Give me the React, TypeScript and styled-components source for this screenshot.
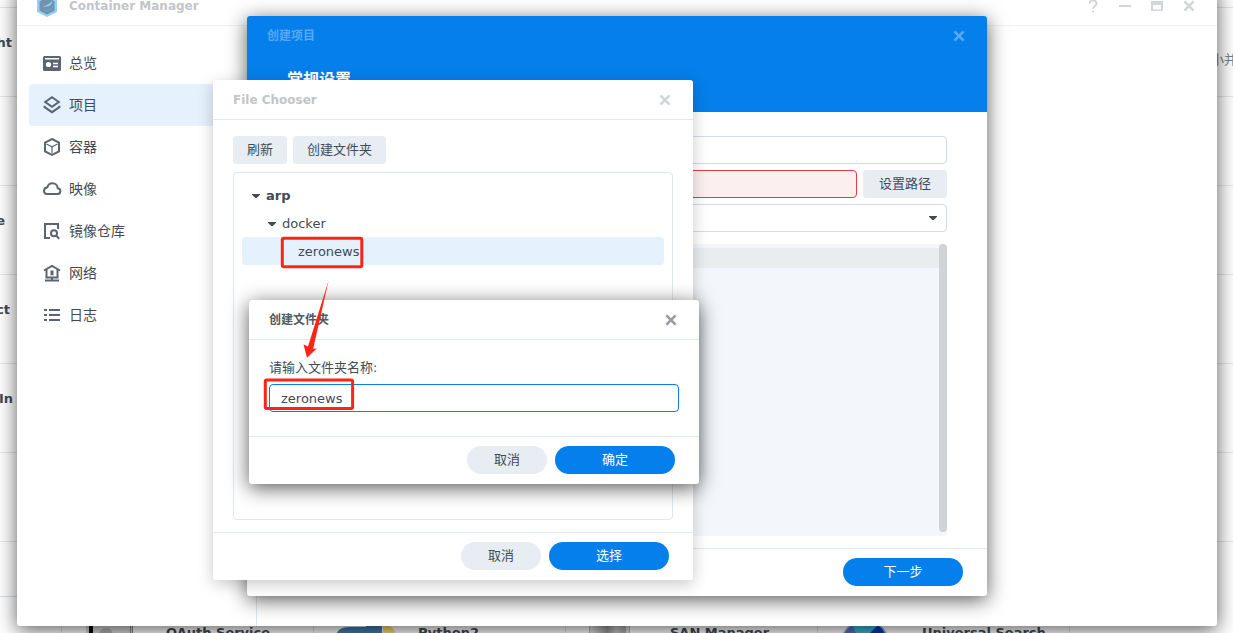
import React from 'react';
import styled, { createGlobalStyle } from 'styled-components';

const GlobalStyle = createGlobalStyle`
  * { box-sizing: border-box; }
  html, body, #root { height: 100%; }
  body {
    margin: 0;
    overflow: hidden;
    background: #fff;
    color: #414b55;
    font: 13px/20px "DejaVu Sans", "Noto Sans CJK SC", sans-serif;
  }
  button, input, select, textarea { font: inherit; color: inherit; }
  svg { display: block; }
`;

const Desktop = styled.div`
  position: relative;
  height: 100%;
  overflow: hidden;
`;

/* Package list that lies behind the windows */
const Backdrop = styled.div`
  display: flex;
  flex-direction: column;
  padding-top: 7px;
`;

const PackageRow = styled.div`
  display: flex;
  justify-content: space-between;
  height: 89px;
  padding-top: 25px;
  border-top: 1px solid #e3e7ec;
  white-space: nowrap;

  &:last-child { height: 55px; }
`;

const PackageName = styled.span<{ $width: number }>`
  display: flex;
  justify-content: flex-end;
  width: ${(p) => p.$width}px;
  overflow: hidden;
  font-weight: bold;
`;

const PackageNote = styled.span`
  margin-right: -4px;
  padding-top: 17px;
  color: #79828b;
`;

const Shelf = styled.div`
  display: grid;
  grid-template-columns: 61px repeat(4, 252px) 1fr;
  margin-right: 100px;
  border-top: 1px solid #d5e1ec;
`;

const ShelfCell = styled.div`
  display: flex;
  gap: 20px;
  height: 88px;
  padding: 26px 0 0 20px;
  border-left: 1px solid #e3e7ec;
  font-weight: bold;
  white-space: nowrap;

  &:first-child { border-left: 0; }
`;

const Frame = styled.section<{ $soft?: boolean }>`
  display: flex;
  flex-direction: column;
  position: absolute;
  background: #fff;
  border-radius: 3px;
  box-shadow: ${(p) =>
    p.$soft ? '0 4px 16px rgba(0, 0, 0, 0.22)' : '0 4px 20px rgba(0, 0, 0, 0.65)'};
`;

const ManagerWindow = styled(Frame)`
  inset: -14px 16px 7px 17px;
`;

const ProjectDialog = styled(Frame)`
  left: 247px;
  top: 16px;
  width: 740px;
`;

const ChooserDialog = styled(Frame)`
  left: 213px;
  top: 80px;
  width: 480px;
`;

const FolderDialog = styled(Frame)`
  left: 249px;
  top: 300px;
  width: 450px;
`;

const TitleBar = styled.header<{ $tone?: 'dim' | 'blue' | 'faint' }>`
  display: flex;
  align-items: center;
  height: 40px;
  padding: 0 12px 0 20px;
  border-bottom: 1px solid
    ${(p) => (p.$tone === 'blue' ? 'transparent' : p.$tone === 'faint' ? '#f1f2f4' : '#e1e8ee')};
  color: ${(p) =>
    p.$tone === 'blue' ? '#58a8f5' : p.$tone ? '#c2c5c9' : '#4f5a64'};
`;

const Title = styled.h1`
  flex: 1;
  margin: 0;
  font-size: 12px;
  line-height: 20px;
  font-weight: bold;
`;

const Logo = styled.span`
  margin-right: 12px;
`;

const IconButton = styled.button<{ $color: string }>`
  display: flex;
  align-items: center;
  justify-content: center;
  width: 32px;
  height: 32px;
  padding: 0;
  border: 0;
  background: none;
  color: ${(p) => p.$color};
`;

const ManagerBody = styled.div`
  display: flex;
  flex: 1;
`;

const Sidebar = styled.nav`
  width: 240px;
  padding: 16px 12px;
  border-right: 1px solid #dde7f0;
`;

const NavLink = styled.a<{ $active?: boolean }>`
  display: flex;
  align-items: center;
  gap: 7px;
  height: 42px;
  padding-left: 13px;
  border-radius: 4px;
  background: ${(p) => (p.$active ? '#e5f1fd' : 'none')};
  color: #414b55;
  font-size: 14px;
  text-decoration: none;

  svg { color: #5b6570; }
`;

const Banner = styled.div`
  height: 96px;
  border-radius: 3px 3px 0 0;
  background: #057feb;
`;

const StepHeading = styled.h2`
  margin: 12px 40px 0;
  color: #fff;
  font-size: 16px;
  line-height: 24px;
`;

const Form = styled.form`
  display: flex;
  flex-direction: column;
  gap: 6px;
  padding: 24px 40px 12px;
`;

const Field = styled.div`
  display: flex;
  gap: 6px;
`;

const TextInput = styled.input<{ $state?: 'error' | 'focus' }>`
  flex: 1;
  min-width: 0;
  height: 28px;
  padding: 0 11px;
  border: 1px solid
    ${(p) => (p.$state === 'error' ? '#e63c41' : p.$state === 'focus' ? '#057feb' : '#d0dde8')};
  border-radius: 4px;
  background: ${(p) => (p.$state === 'error' ? '#fcefef' : '#fff')};
  outline: 0;
`;

const SelectBox = styled.div`
  display: grid;
  flex: 1;
  align-items: center;

  > * { grid-area: 1 / 1; }
  svg { justify-self: end; margin-right: 10px; pointer-events: none; }
`;

const Select = styled.select`
  height: 28px;
  padding: 0 11px;
  border: 1px solid #d0dde8;
  border-radius: 4px;
  background: #fff;
  appearance: none;
`;

const Editor = styled.div`
  display: flex;
  height: 292px;
  margin-top: 6px;
  border-radius: 3px;
  background: linear-gradient(#e9edf0, #e9edf0) 0 4px / 100% 20px no-repeat #f3f7fb;
`;

const Code = styled.textarea`
  flex: 1;
  padding: 4px;
  border: 0;
  background: none;
  resize: none;
`;

const ScrollThumb = styled.div`
  width: 8px;
  height: 288px;
  border-radius: 4px;
  background: #d0d4d7;
`;

const Footer = styled.footer`
  display: flex;
  justify-content: flex-end;
  gap: 8px;
  height: 48px;
  padding: 9px 24px 0;
  border-top: 1px solid #e1e8ee;
`;

const Pill = styled.button<{ $primary?: boolean }>`
  width: ${(p) => (p.$primary ? 120 : 80)}px;
  height: 28px;
  padding: 0;
  border: 0;
  border-radius: 14px;
  background: ${(p) => (p.$primary ? '#057feb' : '#e8edf4')};
  color: ${(p) => (p.$primary ? '#fff' : '#414b55')};
`;

const GreyButton = styled.button<{ $wide?: boolean }>`
  height: 28px;
  padding: 0 ${(p) => (p.$wide ? 16 : 14)}px;
  border: 0;
  border-radius: 3px;
  background: #e8edf4;
`;

const ChooserBody = styled.div`
  display: flex;
  flex-direction: column;
  gap: 8px;
  padding: 16px 20px 12px;
`;

const Toolbar = styled.div`
  display: flex;
  gap: 6px;
`;

const Tree = styled.div`
  height: 348px;
  padding: 8px;
  border: 1px solid #dfe7ee;
  border-radius: 4px;
`;

const TreeRow = styled.div<{ $level: number; $selected?: boolean }>`
  display: flex;
  align-items: center;
  gap: 6px;
  height: 28px;
  padding: 2px 0 0 ${(p) => 10 + p.$level * 16}px;
  border-radius: 4px;
  background: ${(p) => (p.$selected ? '#e5f1fd' : 'none')};
  font-weight: ${(p) => (p.$level ? 'normal' : 'bold')};
`;

const LeafSpace = styled.span`
  width: 8px;
`;

const FolderBody = styled.div`
  display: flex;
  flex-direction: column;
  gap: 6px;
  padding: 18px 20px 24px;
`;

const Annotation = styled.svg`
  position: absolute;
  left: 260px;
  top: 232px;
  pointer-events: none;
`;

const Cross = () => (
  <svg width="12" height="12" viewBox="0 0 12 12" fill="none" stroke="currentColor" strokeWidth="2.6">
    <path d="M1.400 1.300l9.200 9.400M10.600 1.300l-9.200 9.400" />
  </svg>
);

const Caret = () => (
  <svg width="8" height="4" viewBox="0 0 8 4" fill="#414b55">
    <path d="M0 0h8v.7L4.700 4H3.300L0 .7z" />
  </svg>
);

const NavIcon = ({ children }: { children: React.ReactNode }) => (
  <svg width="20" height="20" viewBox="0 0 20 20" fill="none" stroke="currentColor" strokeWidth="2">
    {children}
  </svg>
);

const navItems = [
  {
    label: '总览',
    icon: (
      <>
        <path
          fill="currentColor"
          stroke="none"
          fillRule="evenodd"
          d="M2.500 3h15A1.500 1.500 0 0 1 19 4.500v12a1.500 1.500 0 0 1-1.500 1.500h-15A1.500 1.500 0 0 1 1 16.500v-12A1.500 1.500 0 0 1 2.500 3zM3 5v1.500h14V5z"
        />
        <circle cx="6.500" cy="11.500" r="2.600" fill="#fff" stroke="none" />
        <path d="M11 10.500h5M11 13.500h5" stroke="#fff" strokeWidth="1.300" />
      </>
    ),
  },
  {
    label: '项目',
    active: true,
    icon: (
      <>
        <path d="M10 2.300l6.800 4.700-6.800 4.700L3.200 7z" />
        <path d="M2.600 10.800v1.400L10 17.200l7.400-5v-1.400" />
      </>
    ),
  },
  {
    label: '容器',
    icon: (
      <>
        <path d="M10 2l7 3.600v8.800L10 18l-7-3.600V5.600z" />
        <path d="M4.500 7L10 9.800 15.500 7M10 9.800v6.200" strokeWidth="1.200" />
      </>
    ),
  },
  {
    label: '映像',
    icon: <path d="M5 15.100h10.200a2.900 2.900 0 0 0 .5-5.800C15.500 6.200 13 4.200 10.500 4.200c-2.600 0-4.500 1.500-5.100 4C3.300 8.600 2 10 2 12a3.200 3.200 0 0 0 3 3.100z" />,
  },
  {
    label: '镜像仓库',
    icon: (
      <>
        <path d="M8 17H3V3h13v5" />
        <circle cx="12" cy="12.200" r="3" />
        <path d="M14 14.300l3.200 3.500" />
      </>
    ),
  },
  {
    label: '网络',
    icon: (
      <>
        <path d="M2 7.500L10 3l8 4.500M4.500 6.500v8h11v-8M10 14.500v3M3 17.500h14" />
        <path d="M10 7.500v4.800" strokeWidth="3" />
      </>
    ),
  },
  {
    label: '日志',
    icon: <path d="M2 5h3M7 5h11M2 10h3M7 10h11M2 15h3M7 15h11" />,
  },
];

const backdropRows = [
  { name: 'ht', width: 12, note: '小并' },
  { name: '', width: 0 },
  { name: 'e', width: 5 },
  { name: 'ct', width: 10 },
  { name: 'In', width: 13 },
  { name: '', width: 0 },
  { name: '', width: 0 },
];

const shelfItems = [
  {
    name: 'OAuth Service',
    icon: (
      <>
        <rect x="4" width="46" height="64" rx="3" fill="#d8d8d8" />
        <path d="M7 0h4v64H7z" fill="#000" />
        <path d="M48 0h1v64h-1zM50 0h1v64h-1z" fill="#888" />
        <circle cx="24" cy="12" r="7" fill="#b4b4b4" />
      </>
    ),
  },
  {
    name: 'Python2',
    icon: (
      <>
        <path d="M2 64V12Q4 4 15 4h17V1h16v63z" fill="#3f7fb5" />
        <path d="M49 3h6q6 2 7 10v51H49z" fill="#ffe069" />
      </>
    ),
  },
  {
    name: 'SAN Manager',
    icon: (
      <>
        <defs>
          <linearGradient id="metal">
            <stop offset="0" stopColor="#dedede" />
            <stop offset="0.45" stopColor="#999" />
            <stop offset="0.7" stopColor="#c8c8c8" />
            <stop offset="1" stopColor="#aaa" />
          </linearGradient>
        </defs>
        <path d="M3 0h40v64H3z" fill="#e0e0e0" />
        <path d="M6 0h34v64H6z" fill="url(#metal)" />
        <path d="M3.500 0v64M43.500 0v64" stroke="#b4b4b4" />
      </>
    ),
  },
  {
    name: 'Universal Search',
    icon: (
      <>
        <circle cx="27" cy="22" r="25" fill="#9cbfdc" />
        <circle cx="26" cy="22" r="22" fill="#35bcd8" />
        <path d="M20 22L40 2a23 23 0 0 1 9 20z" fill="#063cbd" />
        <path d="M24 22L14 2A23 23 0 0 0 4 22z" fill="#5672c8" />
      </>
    ),
  },
];

export default function App() {
  return (
    <Desktop>
      <GlobalStyle />
      <Backdrop>
        {backdropRows.map((row, i) => (
          <PackageRow key={i}>
            <PackageName $width={row.width}>{row.name}</PackageName>
            {row.note && <PackageNote>{row.note}</PackageNote>}
          </PackageRow>
        ))}
      </Backdrop>
      <Shelf>
        <ShelfCell />
        {shelfItems.map((item) => (
          <ShelfCell key={item.name}>
            <svg width="64" height="64" viewBox="0 0 64 64">{item.icon}</svg>
            {item.name}
          </ShelfCell>
        ))}
        <ShelfCell />
      </Shelf>

      <ManagerWindow aria-label="Container Manager">
        <TitleBar $tone="faint">
          <Logo>
            <svg width="20" height="22" viewBox="0 0 20 22">
              <path d="M10 0l10 5v12l-10 5-10-5V5z" fill="#93d0f5" />
              <path d="M10 2.500l7.500 3.800v9.400L10 19.500l-7.500-3.800V6.300z" fill="#7492ae" />
              <path d="M4 11c3 1 8-1 11-5 .5 4-4 7-11 5z" fill="#84dcec" />
              <path d="M6 15c4 0 8-1 10-4 0 3-5 6.500-10 4z" fill="#62a8cf" />
            </svg>
          </Logo>
          <Title>Container Manager</Title>
          <IconButton $color="#d3d6d9" aria-label="帮助">
            <svg width="10" height="14" viewBox="0 0 10 14" fill="none" stroke="currentColor" strokeWidth="2">
              <path d="M1.500 4.500C1.500 2.500 3 1.500 5 1.500s3.500 1 3.500 3C8.500 7 5 7 5 9.800M5 11.500v2" />
            </svg>
          </IconButton>
          <IconButton $color="#d3d6d9" aria-label="最小化">
            <svg width="12" height="2" viewBox="0 0 12 2"><path d="M0 0h12v2H0z" fill="currentColor" /></svg>
          </IconButton>
          <IconButton $color="#d3d6d9" aria-label="最大化">
            <svg width="12" height="10" viewBox="0 0 12 10">
              <path d="M0 0h12v10H0zM2 4v4.500h8V4z" fill="currentColor" fillRule="evenodd" />
            </svg>
          </IconButton>
          <IconButton $color="#d3d6d9" aria-label="关闭"><Cross /></IconButton>
        </TitleBar>
        <ManagerBody>
          <Sidebar>
            {navItems.map((item) => (
              <NavLink key={item.label} href="#" $active={item.active}>
                <NavIcon>{item.icon}</NavIcon>
                {item.label}
              </NavLink>
            ))}
          </Sidebar>
        </ManagerBody>
      </ManagerWindow>

      <ProjectDialog role="dialog" aria-label="创建项目">
        <Banner>
          <TitleBar $tone="blue">
            <Title>创建项目</Title>
            <IconButton $color="#5aa9f2" aria-label="关闭"><Cross /></IconButton>
          </TitleBar>
          <StepHeading>常规设置</StepHeading>
        </Banner>
        <Form>
          <Field><TextInput aria-label="项目名称" /></Field>
          <Field>
            <TextInput $state="error" aria-label="路径" />
            <GreyButton type="button" $wide>设置路径</GreyButton>
          </Field>
          <Field>
            <SelectBox>
              <Select aria-label="来源"><option value="" /></Select>
              <Caret />
            </SelectBox>
          </Field>
          <Editor>
            <Code aria-label="配置" />
            <ScrollThumb />
          </Editor>
        </Form>
        <Footer><Pill $primary>下一步</Pill></Footer>
      </ProjectDialog>

      <ChooserDialog $soft role="dialog" aria-label="File Chooser">
        <TitleBar $tone="dim">
          <Title>File Chooser</Title>
          <IconButton $color="#d3d6d9" aria-label="关闭"><Cross /></IconButton>
        </TitleBar>
        <ChooserBody>
          <Toolbar>
            <GreyButton>刷新</GreyButton>
            <GreyButton>创建文件夹</GreyButton>
          </Toolbar>
          <Tree role="tree">
            <TreeRow role="treeitem" $level={0}><Caret />arp</TreeRow>
            <TreeRow role="treeitem" $level={1}><Caret />docker</TreeRow>
            <TreeRow role="treeitem" $level={2} $selected><LeafSpace />zeronews</TreeRow>
          </Tree>
        </ChooserBody>
        <Footer>
          <Pill>取消</Pill>
          <Pill $primary>选择</Pill>
        </Footer>
      </ChooserDialog>

      <FolderDialog role="dialog" aria-label="创建文件夹">
        <TitleBar>
          <Title>创建文件夹</Title>
          <IconButton $color="#969ca4" aria-label="关闭"><Cross /></IconButton>
        </TitleBar>
        <FolderBody>
          <label htmlFor="folder-name">请输入文件夹名称:</label>
          <Field><TextInput id="folder-name" $state="focus" defaultValue="zeronews" /></Field>
        </FolderBody>
        <Footer>
          <Pill>取消</Pill>
          <Pill $primary>确定</Pill>
        </Footer>
      </FolderDialog>

      <Annotation width="110" height="184" viewBox="0 0 110 184" fill="none" stroke="#ff2416" strokeWidth="3">
        <rect x="22.300" y="6.200" width="79.500" height="28.500" rx="1.500" />
        <rect x="5.300" y="148" width="87.300" height="28.500" rx="1.500" />
        <path d="M68.600 48.500L48 114.500l-4.500-2L47 125.800l9.800-9.300-3.600.2z" fill="#ff2416" stroke="none" />
      </Annotation>
    </Desktop>
  );
}
